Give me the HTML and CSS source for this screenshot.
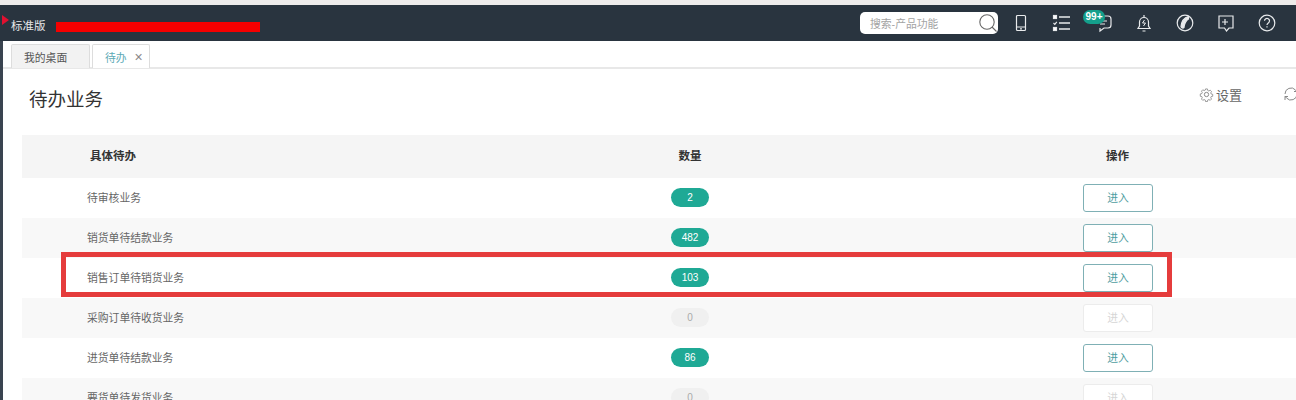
FILE: index.html
```html
<!DOCTYPE html>
<html lang="zh">
<head>
<meta charset="utf-8">
<title>待办业务</title>
<link rel="stylesheet" href="styles.css">
</head>
<body>
<div class="topstrip"></div>
<header class="bar">
  <span class="edition">标准版</span>
  <span class="redact"></span>
  <span class="marker"></span>
  <div class="search"><span class="search-text">搜索-产品功能</span>
    <svg class="search-ico" viewBox="0 0 20 20"><circle cx="9" cy="9" r="7.2"/><path d="M14 14l4.500 4.500"/></svg>
  </div>
  <div class="icons">
    <svg class="ico" viewBox="0 0 20 20"><rect x="5.500" y="2.500" width="9" height="15" rx="1"/><path d="M5.500 14h9M9 15.800h2"/></svg>
    <svg class="ico" viewBox="0 0 20 20"><path d="M7 4h11M7 10h11M7 16h11" stroke-width="1.600"/><rect x="1.500" y="2.500" width="3" height="3" fill="#fff"/><rect x="1.500" y="14.500" width="3" height="3" fill="#fff"/><path d="M1.500 10l1.300 1.300 2-2.500"/></svg>
    <span class="msg">
      <svg class="ico" viewBox="0 0 20 20"><path d="M6 3h9a3 3 0 0 1 3 3v6a3 3 0 0 1-3 3h-4l-4 3v-3"/><path d="M7 8h7M7 11h5"/></svg>
      <span class="badge">99+</span>
    </span>
    <svg class="ico" viewBox="0 0 20 20"><path d="M4 15.500h12l-1.500-2.500v-4a4.500 4.500 0 0 0-9 0v4z"/><path d="M8.500 18h3M10 2v2"/><path d="M10.500 7l-2 3h3l-2 3" stroke-width="1"/></svg>
    <svg class="ico" viewBox="0 0 20 20"><circle cx="10" cy="10" r="7.800"/><path d="M13.500 3.500c-4 1-7 5-7.500 10 .500 1.500 2 2 3 1 0-3 2-7 4.500-8.500z" fill="#e8eaec"/></svg>
    <svg class="ico" viewBox="0 0 20 20"><path d="M3 3h14v12h-4l-2.500 3-2-3H3z"/><path d="M9 6v6M6 9h6"/></svg>
    <svg class="ico" viewBox="0 0 20 20"><circle cx="10" cy="10" r="7.800"/><path d="M7.500 7.800a2.500 2.500 0 1 1 3.800 2.200c-.900.600-1.300 1-1.300 2"/><path d="M10 13.300v1.200"/></svg>
  </div>
</header>
<div class="shell">
<nav class="tabs">
  <span class="tab tab-off">我的桌面</span>
  <span class="tab tab-on">待办<span class="close">×</span></span>
</nav>
<main class="main">
  <div class="title-row">
    <h1 class="title">待办业务</h1>
    <div class="tools">
      <span class="set">
        <svg class="gear" viewBox="0 0 16 16"><circle cx="8" cy="8" r="2.300"/><path d="M6.800 1h2.400l.4 2 1.300.6 1.800-1 1.600 1.700-1 1.700.5 1.300 2 .5v2.400l-2 .5-.5 1.300 1 1.700-1.600 1.600-1.800-1-1.300.6-.4 2H6.800l-.4-2-1.300-.6-1.800 1-1.600-1.600 1-1.700-.5-1.300-2-.5V7.300l2-.5.500-1.300-1-1.700 1.600-1.700 1.800 1 1.300-.6z" transform="translate(1.200 1.200) scale(.85)"/></svg>设置
      </span>
      <svg class="refresh" viewBox="0 0 16 16"><path d="M2 8a6 6 0 0 1 10.500-4l1.500 1.500M14 8a6 6 0 0 1-10.500 4L2 10.500"/><path d="M14 2v3.500h-3M2 14v-3.500h3"/></svg>
    </div>
  </div>
  <section class="table">
    <div class="row head"><span class="c-name head-name">具体待办</span><span class="c-num">数量</span><span class="c-act">操作</span></div>
    <div class="row"><span class="c-name">待审核业务</span><span class="c-num"><b class="pill">2</b></span><span class="c-act"><a class="btn">进入</a></span></div>
    <div class="row alt"><span class="c-name">销货单待结款业务</span><span class="c-num"><b class="pill">482</b></span><span class="c-act"><a class="btn">进入</a></span></div>
    <div class="row"><span class="c-name">销售订单待销货业务</span><span class="c-num"><b class="pill">103</b></span><span class="c-act"><a class="btn">进入</a></span></div>
    <div class="row alt"><span class="c-name">采购订单待收货业务</span><span class="c-num"><b class="pill pill-off">0</b></span><span class="c-act"><a class="btn btn-off">进入</a></span></div>
    <div class="row"><span class="c-name">进货单待结款业务</span><span class="c-num"><b class="pill">86</b></span><span class="c-act"><a class="btn">进入</a></span></div>
    <div class="row alt"><span class="c-name">要货单待发货业务</span><span class="c-num"><b class="pill pill-off">0</b></span><span class="c-act"><a class="btn btn-off">进入</a></span></div>
  </section>
</main>
</div>
<div class="highlight"></div>
</body>
</html>
```
FILE: styles.css
```css
* { box-sizing: border-box; }
html, body { margin: 0; height: 400px; overflow: hidden; }
body { background: #fff; color: #333; font-family: "Liberation Sans", "Noto Sans CJK SC", sans-serif; position: relative; }
.topstrip { height: 5px; background: #eeeceb; }
.bar { height: 36px; background: #29343f; display: flex; align-items: center; position: relative; padding-left: 11px; color: #e8eaec; }
.edition { font-size: 11.500px; width: 45px; margin-top: 3px; }
.redact { width: 204px; height: 10px; background: #f60000; margin-top: 8px; }
.marker { position: absolute; left: 2px; top: 10px; width: 0; height: 0; border-left: 7px solid #e01030; border-top: 5px solid transparent; border-bottom: 5px solid transparent; }
.search { margin-left: 600px; width: 138px; height: 22px; background: #fff; border-radius: 5px; display: flex; align-items: center; justify-content: space-between; padding: 0 0 0 10px; }
.search-text { font-size: 10.800px; color: #a3a3a3; }
.search-ico { width: 20px; height: 20px; fill: none; stroke: #666; stroke-width: 1.100; }
.icons { display: flex; align-items: center; gap: 21px; margin-left: 13px; }
.ico { width: 20px; height: 20px; fill: none; stroke: #e8eaec; stroke-width: 1.200; display: block; }
.msg { position: relative; display: block; }
.badge { position: absolute; left: -10px; top: -3px; width: 22px; height: 14px; border-radius: 7px; background: #14a08c; color: #fff; font-size: 10px; font-weight: bold; text-align: center; line-height: 14px; }
.shell { border-left: 3px solid #3a4450; height: 359px; }
.tabs { height: 28px; background: #fff; border-bottom: 2px solid #e8e8e8; display: flex; gap: 2px; padding-left: 8px; align-items: flex-end; }
.tab { height: 24px; font-size: 10.800px; border: 1px solid #ddd; border-bottom: 0; display: flex; align-items: center; border-radius: 2px 2px 0 0; margin-bottom: -1px; }
.tab-off { width: 79px; background: #f2f2f2; color: #555; padding-left: 12px; }
.tab-on { width: 58px; background: #fff; color: #5ba9b5; padding-left: 12px; }
.close { color: #888; font-size: 14px; margin-left: 8px; }
.main { padding-left: 19px; }
.title-row { height: 66px; display: flex; justify-content: space-between; align-items: center; }
.title { margin: 0 0 8px 7px; font-size: 18.500px; font-weight: normal; color: #333; }
.tools { display: flex; align-items: center; margin: 0 -3px 16px 0; }
.set { display: flex; align-items: center; gap: 2px; font-size: 13px; color: #666; }
.gear { width: 15px; height: 15px; fill: none; stroke: #777; stroke-width: .9; }
.refresh { width: 16px; height: 16px; fill: none; stroke: #888; stroke-width: 1; margin-left: 41px; }
.row { display: grid; grid-template-columns: 628px 80px 1fr; height: 40px; align-items: center; font-size: 10.800px; color: #666; }
.head { height: 43px; background: #f5f5f5; color: #333; font-weight: bold; font-size: 11.500px; padding-bottom: 4px; }
.alt { background: #f8f8f8; }
.c-name { padding-left: 65px; padding-bottom: 2px; }
.head-name { padding-left: 68px; padding-bottom: 0; }
.c-num { display: flex; justify-content: center; }
.c-act { padding-left: 353px; }
.head .c-act { padding-left: 376px; }
.pill { display: block; width: 38px; height: 19px; margin-bottom: 1px; border-radius: 10px; background: #1fa995; color: #fff; font-weight: normal; font-size: 10px; line-height: 19px; text-align: center; }
.pill-off { background: #f0f0f0; color: #aaa; }
.btn { display: block; width: 70px; height: 28px; border: 1px solid #7fb0b5; border-radius: 3px; background: #fff; color: #4f9da0; line-height: 26px; font-size: 10.800px; text-align: center; }
.btn-off { border-color: #ececec; color: #d6d6d6; }
.highlight { position: absolute; left: 61px; top: 252px; width: 1111px; height: 45px; border: 5px solid #e53c3c; }
```
